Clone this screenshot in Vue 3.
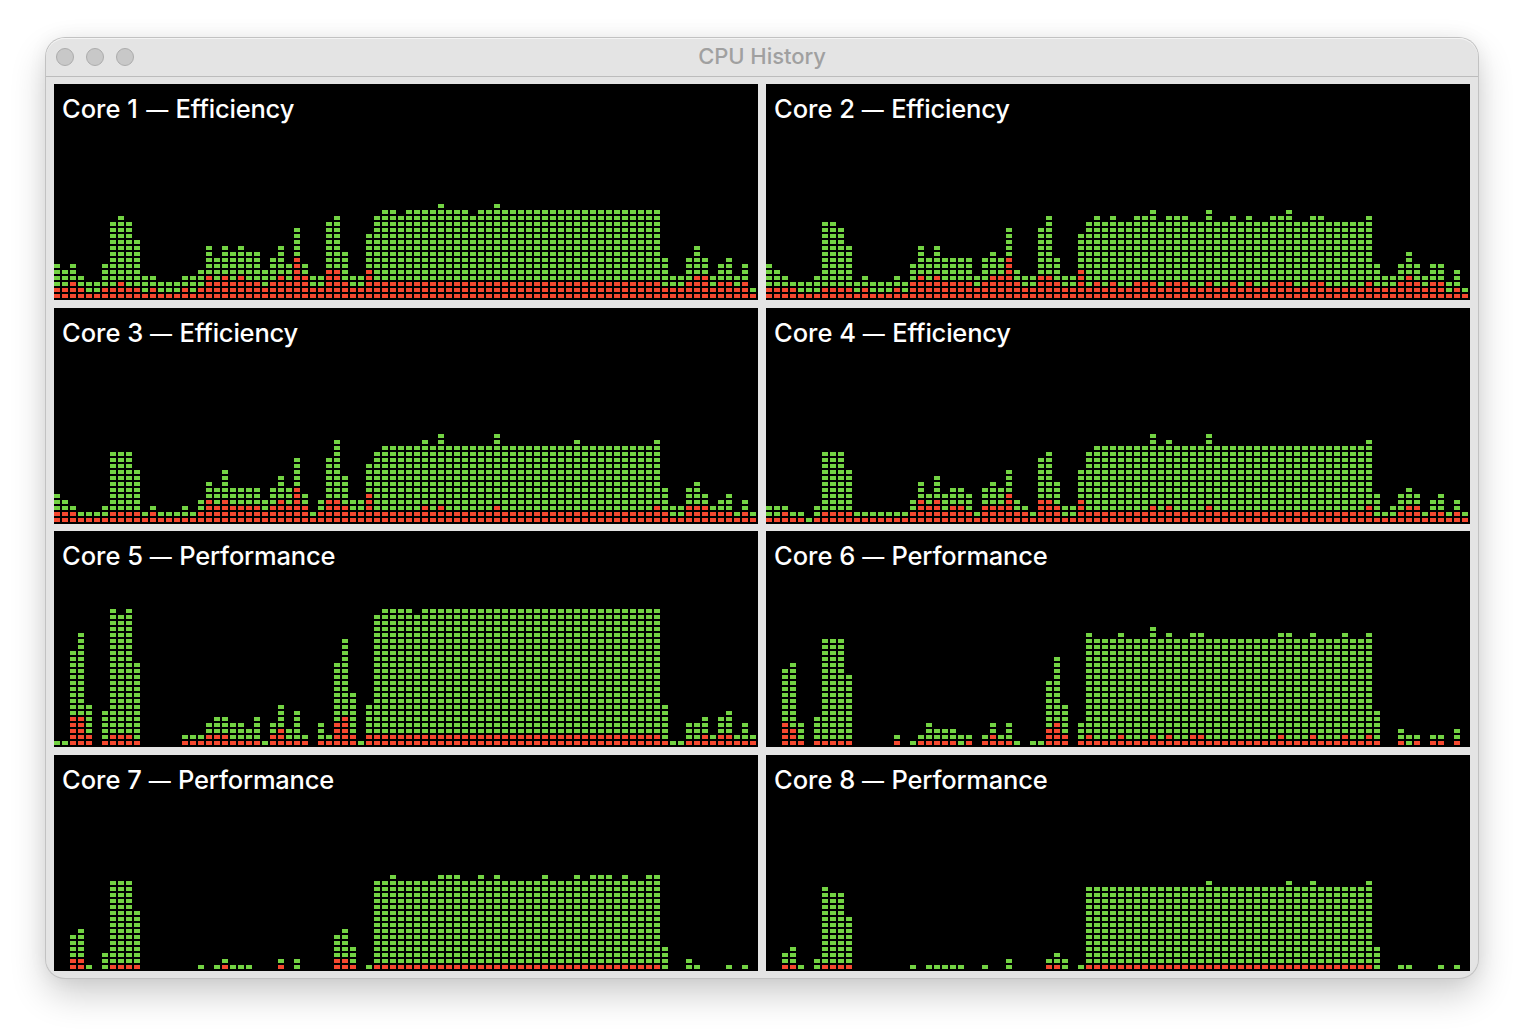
<script setup>
// Load samples, one base-36 digit per column: number of lit cells.
// "total" is the full column height, "system" the red part at its foot.
const samples = [
  {
    core: 'Core 1', kind: 'Efficiency',
    total: '656433 6deda 44333 44 5 9798988 57 96c6 44 de8 44 b effe ffffgfffeffg ffffffffff ffffffffff 7 44 797 4 67 4 62',
    system: '223211 22322 12111 21 2 4343433 23 4374 22 553 22 5 3333 333333333333 3333333333 3333333333 2 22 344 2 33 2 31',
  },
  {
    core: 'Core 2', kind: 'Efficiency',
    total: '654333 4ddc9 34333 43 6 9797777 47 87c5 44 ce7 44 b dede ddeefdeeeddf ddededdeef ddeeddddde 6 44 686 4 66 3 52',
    system: '222211 12222 12111 21 3 4343333 23 4473 22 443 22 5 2323 223332333223 2232322333 2233222223 2 22 343 2 33 1 21',
  },
  {
    core: 'Core 3', kind: 'Efficiency',
    total: '543222 3ccc9 23222 32 4 7696666 46 86b5 24 be8 44 a cddd ddedfddddddf dddddddddeddddddddde 6 33 675 3 45 2 42',
    system: '222111 12222 12111 11 2 4343333 23 4363 12 443 22 5 2222 223232222223 22222222222222222223 2 11 333 2 22 1 21',
  },
  {
    core: 'Core 4', kind: 'Efficiency',
    total: '333221 3ccc9 22222 22 4 7585665 26 7694 32 bc7 33 9 cddd ddddfdeddddf ddddddddddddddddddde 5 23 565 2 45 2 42',
    system: '112110 12222 11111 11 2 4342332 13 3352 21 443 11 4 2222 222232322223 22222222222222222223 1 11 233 1 22 1 21',
  },
  {
    core: 'Core 5', kind: 'Performance',
    total: '11gj70 6nmne 00000 22 2 4554435 14 7362 04 2ei9 1 7 mnnn nmnnnnnnnnnn nnnnnnnnnnnnnnnnnnnn 7 11 445 2 56 2 42',
    system: '005520 12221 00000 11 1 2221111 02 3111 01 1452 0 2 2222 222222222222 22222222222222222222 1 00 112 1 22 1 11',
  },
  {
    core: 'Core 6', kind: 'Performance',
    total: '00de40 5iiic 00000 20 1 2433322 02 4241 01 1bf7 0 4 jiii jiiikijiijji iiiiiiiijjiijiiijiij 6 00 322 0 22 0 30',
    system: '004310 11111 00000 10 0 1111101 01 2110 00 0342 0 1 2111 211121211221 11111111211121112112 1 00 101 0 11 0 10',
  },
  {
    core: 'Core 7', kind: 'Performance',
    total: '006710 3fffa 00000 00 1 0121110 00 2020 00 0674 0 1 ffgf ffffgggffgfg fffffgfffgfgggfgffgg 4 00 210 0 01 0 10',
    system: '002200 01111 00000 00 0 0010000 00 1000 00 0221 0 0 1111 111111111111 11111111111111111111 0 00 000 0 00 0 00',
  },
  {
    core: 'Core 8', kind: 'Performance',
    total: '003410 2edd9 00000 00 1 0111110 01 0020 00 0232 0 1 eeee eeeeeeeeeeef eeeeeeeeefeefeeeeeef 4 00 110 0 01 0 10',
    system: '001100 01111 00000 00 0 0000000 00 0000 00 0110 0 0 1111 111111111111 11111111111111111111 0 00 000 0 00 0 00',
  },
]

const digits = (s) => [...s.replace(/\s/g, '')].map((c) => parseInt(c, 36))

const CELL = 6
const cores = samples.map(({ core, kind, total, system }) => {
  const sys = digits(system)
  return {
    core,
    kind,
    columns: digits(total).map((t, i) => ({
      user: (t - sys[i]) * CELL + 'px',
      system: sys[i] * CELL + 'px',
    })),
  }
})
</script>

<template>
  <main class="desktop">
    <section class="window">
      <header class="titlebar">
        <div class="lights"><i></i><i></i><i></i></div>
        <h1 class="title">CPU History</h1>
      </header>
      <div class="grid">
        <article v-for="item in cores" :key="item.core" class="core">
          <h2 class="label">{{ item.core }} <span class="dash">—</span> <span class="kind">{{ item.kind }}</span></h2>
          <div class="chart">
            <div v-for="(col, i) in item.columns" :key="i" class="column">
              <div class="user" :style="{ height: col.user }"></div>
              <div class="system" :style="{ height: col.system }"></div>
            </div>
          </div>
        </article>
      </div>
    </section>
  </main>
</template>

<style>
body {
  background: #fff;
}
</style>

<style scoped>
.desktop {
  box-sizing: border-box;
  width: 1524px;
  height: 1032px;
  padding: 38px 46px 54px;
  overflow: hidden;
  background: #fff;
  font-family: Inter, 'Liberation Sans', sans-serif;
}
.window {
  box-sizing: border-box;
  width: 1432px;
  height: 940px;
  border-radius: 19px;
  background: #e4e4e4;
  box-shadow:
    0 0 0 1px #c2c2c2,
    inset 0 1px 0 #f4f4f4,
    0 16px 36px rgba(0, 0, 0, 0.2),
    0 0 20px rgba(0, 0, 0, 0.06);
}
.titlebar {
  box-sizing: border-box;
  display: grid;
  grid-template-columns: 1fr auto 1fr;
  align-items: center;
  height: 39px;
  padding: 0 10px;
  border-bottom: 1px solid #bcbcbc;
}
.lights {
  display: flex;
  gap: 12px;
}
.lights i {
  box-sizing: border-box;
  width: 18px;
  height: 18px;
  border: 1px solid #acacac;
  border-radius: 50%;
  background: #c8c8c8;
}
.title {
  margin: 0;
  padding-bottom: 2px;
  color: #a0a0a0;
  font-size: 22px;
  font-weight: 500;
  line-height: 36px;
  letter-spacing: -0.05px;
}
.grid {
  display: grid;
  grid-template-columns: 704px 704px;
  grid-template-rows: 224px 223px 224px 216px;
  column-gap: 8px;
  padding: 7px 8px 0;
}
.core {
  display: flex;
  flex-direction: column;
  height: 216px;
  background: #000;
}
.label {
  margin: 0;
  padding: 9px 8px 0;
  color: #fff;
  font-size: 25.5px;
  font-weight: 500;
  line-height: 32px;
  white-space: nowrap;
}
.dash {
  margin-right: 0.6px;
  font-size: 22px;
  line-height: 1;
}
.core:first-child .dash {
  margin-left: 1.5px;
}
.kind {
  letter-spacing: -0.2px;
}
.chart {
  flex: 1;
  display: flex;
  align-items: flex-end;
  gap: 2px;
}
.column {
  width: 6px;
}
.user {
  background: repeating-linear-gradient(to top, transparent 0 2px, #73d343 2px 6px);
}
.system {
  background: repeating-linear-gradient(to top, transparent 0 2px, #f5482f 2px 6px);
}
</style>
